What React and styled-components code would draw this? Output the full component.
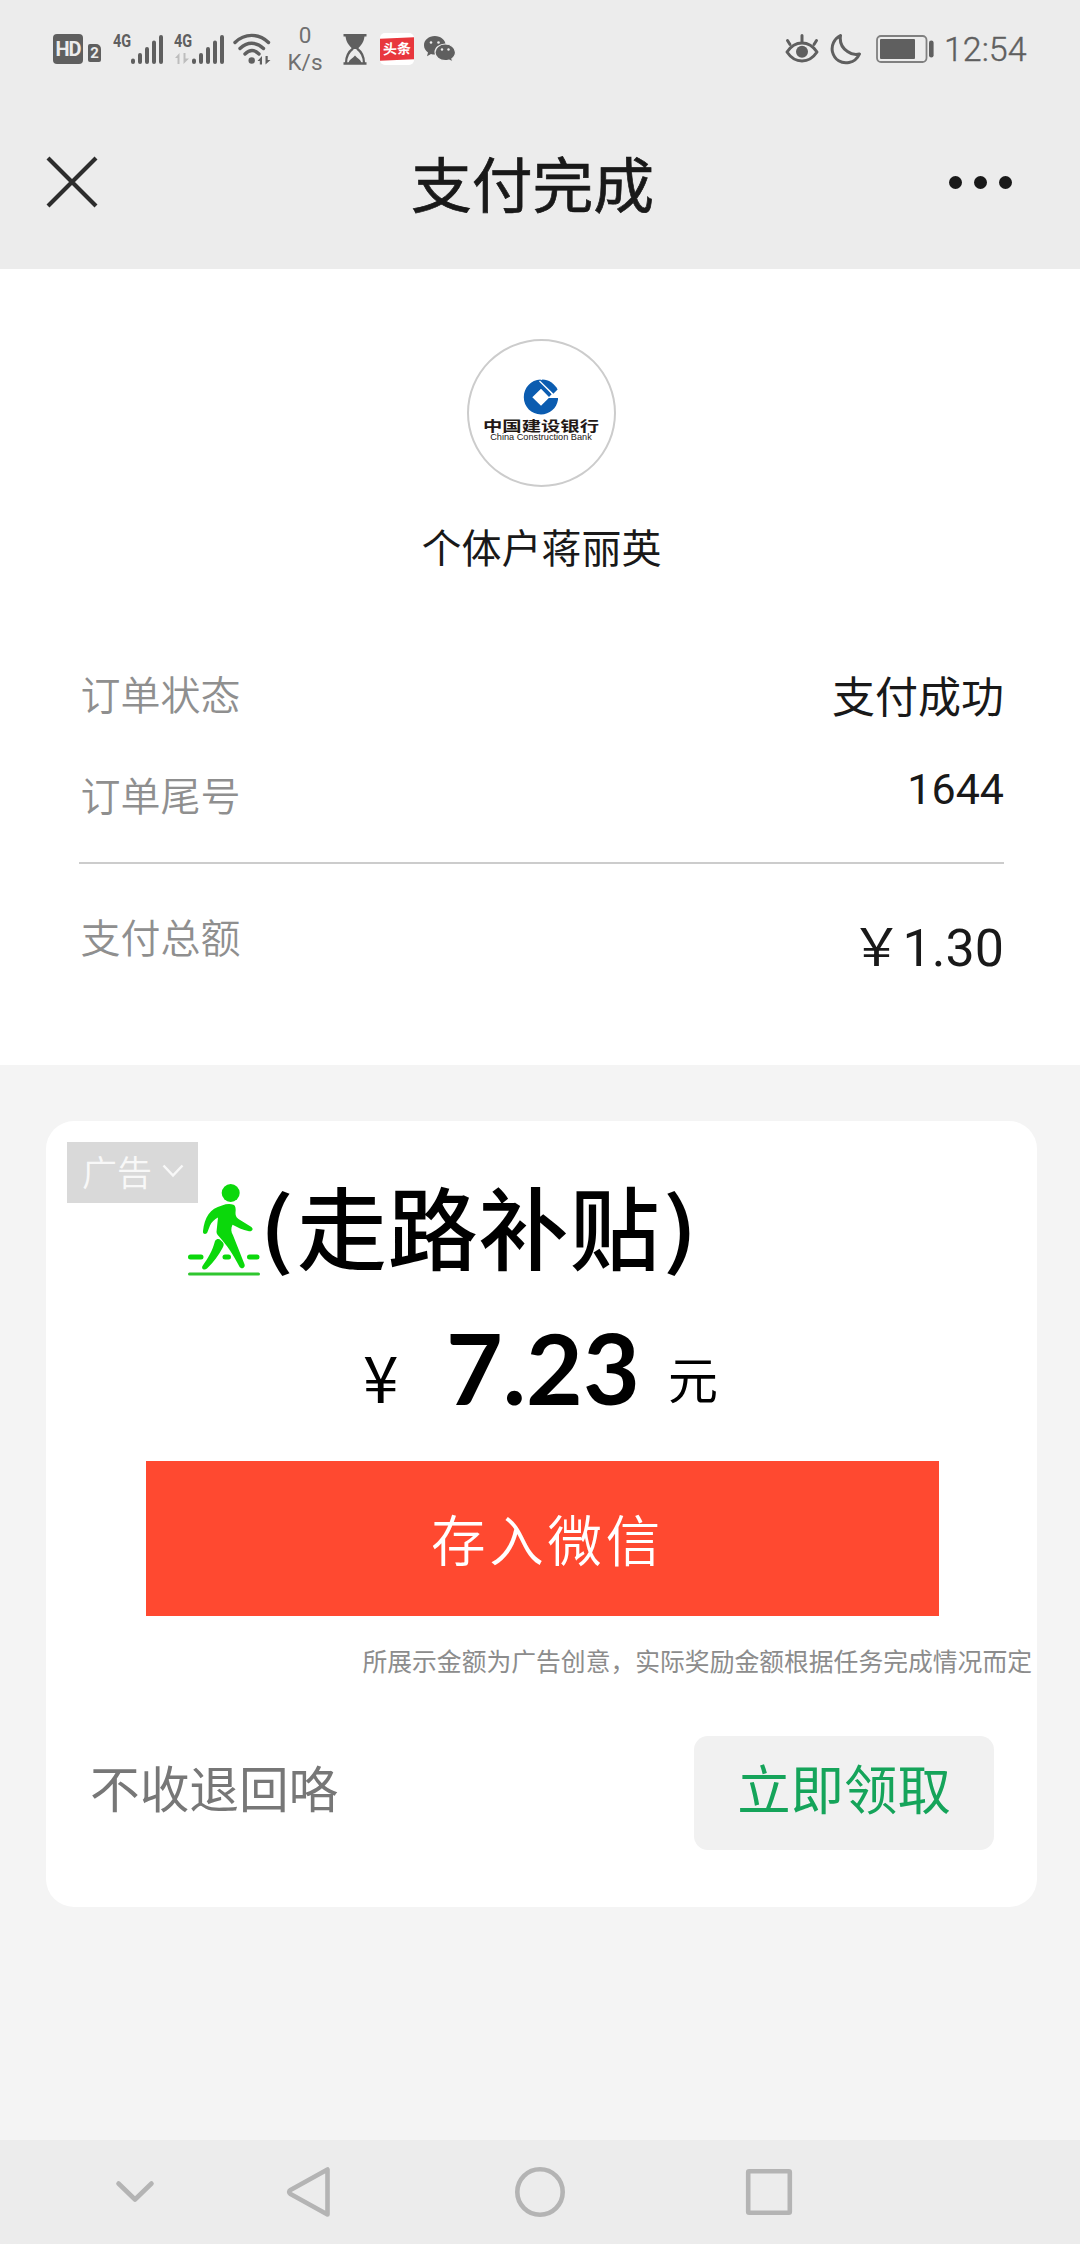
import React from 'react';
import styled, { createGlobalStyle } from 'styled-components';

const cjk = '"Noto Sans CJK SC", sans-serif';
const latin = 'Roboto, "Noto Sans CJK SC", sans-serif';

const GlobalStyle = createGlobalStyle`
  * { box-sizing: border-box; }
  body {
    margin      : 0;
    background  : #f4f4f4;
    font-family : ${cjk};
  }
`;

const SignalBars = () => (
  <svg width="32" height="32" viewBox="0 0 32 32" stroke="#5f5f5f" strokeWidth="4" strokeLinecap="round">
    <path d="M2 27.500v1.500M9 22v7M16 16v13M23 9.500v19.500M30 4v25" />
  </svg>
);

const WifiIcon = () => (
  <svg width="38" height="32" viewBox="0 0 38 32" fill="none" stroke="#5f5f5f" strokeWidth="3.4" strokeLinecap="round">
    <path d="M2 9.500C11.500 0 26 0 35.500 9.500M7 15.500C14 8.500 23.500 8.500 30.500 15.500M12 21c4.500-4.500 9.500-4.500 14 0" />
    <circle cx="18.700" cy="27.500" r="3.200" fill="#5f5f5f" stroke="none" />
    <path d="M24.500 28l4.500-5v8.500h-2.200V28zM37.500 27l-5 4.500V23h2.200v4z" fill="#5f5f5f" stroke="none" />
  </svg>
);

const HourglassIcon = () => (
  <svg width="24" height="32" viewBox="0 0 24 32" fill="none" stroke="#5f5f5f">
    <path d="M.5 2.200h23M.5 30.500h23" strokeWidth="2.400" />
    <path d="M2.500 2h19c0 7-4 11-7 14h-5c-3-3-7-7-7-14z" fill="#5f5f5f" stroke="none" />
    <path d="M10 15.500c-4 3-7 7-7 14.500M14 15.500c4 3 7 7 7 14.500" strokeWidth="2.200" />
    <path d="M5.500 30c1-4 4-4.500 6.500-7.500 2.500 3 5.500 3.500 6.500 7.500z" fill="#5f5f5f" stroke="none" />
  </svg>
);

const WechatIcon = () => (
  <svg width="32" height="26" viewBox="0 0 32 26">
    <path
      d="M10.800 0C4.800 0 0 4 0 9.200c0 3 1.500 5.500 4 7.200l-1 3.800 4-2.300c1.200.4 2.500.6 3.800.6 6 0 10.800-4 10.800-9.300C21.600 4 16.800 0 10.800 0z"
      fill="#5f5f5f"
    />
    <path
      d="M21.200 8c5.800 0 10.300 3.700 10.300 8.300 0 2.700-1.400 5-3.600 6.500l.8 3.200-3.600-1.900c-1.200.3-2.500.6-3.900.6-5.700 0-10.200-3.800-10.200-8.400S15.500 8 21.200 8z"
      fill="#5f5f5f" stroke="#ececec" strokeWidth="1.200"
    />
    <g fill="#ececec">
      <circle cx="7" cy="6.500" r="1.300" /><circle cx="14.500" cy="6.500" r="1.300" />
      <circle cx="18" cy="13.500" r="1.200" /><circle cx="24.500" cy="13.500" r="1.200" />
    </g>
  </svg>
);

const EyeIcon = () => (
  <svg width="34" height="32" viewBox="0 0 34 32" fill="none" stroke="#5f5f5f" strokeWidth="3" strokeLinecap="round" strokeLinejoin="round">
    <path d="M2 19C10 7 24 7 32 19 24 31 10 31 2 19z" />
    <path d="M17 8.500v-6M5 11.500l-2.500-4M29 11.500l2.500-4" />
    <circle cx="17" cy="18.800" r="6" fill="#5f5f5f" stroke="none" />
  </svg>
);

const MoonIcon = () => (
  <svg width="32" height="32" viewBox="0 0 32 32" fill="none" stroke="#5f5f5f" strokeWidth="3" strokeLinejoin="round">
    <path d="M10.500 2.500C4 6 1 12.500 2.500 19c2 8 9 12 16.500 10.500 5-1 8.500-4 10.500-8.500-4 1-8 .5-12-2.500C11.500 14.500 9.500 9 10.500 2.500z" />
  </svg>
);

const BatteryIcon = () => (
  <svg width="58" height="28" viewBox="0 0 58 28">
    <rect x="1" y="1" width="49.500" height="26" rx="4" fill="none" stroke="#808080" strokeWidth="1.800" />
    <rect x="4" y="4" width="35" height="20" rx="1" fill="#5f5f5f" />
    <rect x="53" y="5.500" width="4.600" height="17" rx="2.300" fill="#5f5f5f" />
  </svg>
);

const CloseIcon = () => (
  <svg width="52" height="52" viewBox="0 0 52 52" stroke="#2c2c2c" strokeWidth="4.200">
    <path d="M2 2l48 48M50 2L2 50" />
  </svg>
);

const BankLogo = () => (
  <svg width="36" height="36" viewBox="0 0 36 36">
    <path
      d="M17.500 .5C8 1 .8 8.500 .8 18.300c0 9.500 7.600 17.200 17.200 17.200 8.600 0 15.700-6.200 17-14.700v-1.800H25.800L18 26.800 9.300 18.300 18 9.700l8 8.300 2.700-2.700z"
      fill="#0b5cb0"
    />
    <path d="M17 1.700L30.300 14.800l4.300-4.300C31.500 4.500 25.500 .5 19.500 .5z" fill="#0b5cb0" />
    <path d="M16.500 2L29.500 15" stroke="#fff" strokeWidth="1.200" />
  </svg>
);

const WalkerIcon = () => (
  <svg width="74" height="92" viewBox="0 0 74 92" fill="#0bd80b">
    <circle cx="43.700" cy="9" r="9" />
    <path d="M35 21.500c4-1.500 8-1.800 11.500-.8 2.200 1 2.500 4 2 8 0 4 1.500 5.500 5 7.500l10.500 6.500c3 2 1.500 5-2 4.500-6.500-1.500-12-4-16.500-6.500-1.800 4-1.500 7 .5 10.500l11.500 29c1.300 3.500-3 5.500-5 2.500C46 70 40 61.500 32.500 53c-2.500-2.500-3.500-4-2.800-7L31 33.500c-3.500 2-6.500 4.500-8 8l-2.700 7c-1.300 2.500-5 1.500-4.300-1.500C17.500 33.500 23 24.500 35 21.500z" />
    <path d="M28 57c2-2.500 4-2.500 6-.5 3 2.500 3.500 4 1.500 7.500-4 7.500-9 14.500-15.500 20.500-3 2.500-6 0-4.500-2.500C21 74 25.500 67 28 57z" />
    <path d="M3.500 73h10.500M38 73h3.500M62.500 73h7.500" stroke="#0bd80b" strokeWidth="5" strokeLinecap="round" />
    <path d="M2.500 90h69" stroke="#2fc62f" strokeWidth="3" strokeLinecap="round" />
  </svg>
);

const rows = [
  { label: '订单状态', value: '支付成功', lh: 72 },
  { label: '订单尾号', value: '1644', lh: 53 },
];

const App = () => (
  <Page>
    <GlobalStyle />
    <StatusBar>
      <HdBadge>HD</HdBadge>
      <SimBadge>2</SimBadge>
      <Network $left={12}>
        <NetworkType><span>4G</span></NetworkType>
        <SignalBars />
      </Network>
      <Network $left={11}>
        <NetworkType>
          <span>4G</span>
          <svg width="14" height="11" viewBox="0 0 14 11" fill="#bdbdbd">
            <path d="M0 5l4.500-5v11H2.500V5zM14 5.500L8.500 11V0h2v5.500z" />
          </svg>
        </NetworkType>
        <SignalBars />
      </Network>
      <Slot $left={9}><WifiIcon /></Slot>
      <Speed><span>0</span><span>K/s</span></Speed>
      <Slot $left={20}><HourglassIcon /></Slot>
      <Toutiao><span>头条</span></Toutiao>
      <Slot $left={10}><WechatIcon /></Slot>
      <StatusRight>
        <EyeIcon />
        <Slot $left={11}><MoonIcon /></Slot>
        <Slot $left={14}><BatteryIcon /></Slot>
        <Clock>12:54</Clock>
      </StatusRight>
    </StatusBar>

    <TitleBar>
      <CloseIcon />
      <Title>支付完成</Title>
      <More><i /><i /><i /></More>
    </TitleBar>

    <Receipt>
      <Avatar>
        <BankLogo />
        <BankName>中国建设银行</BankName>
        <BankNameEn>China Construction Bank</BankNameEn>
      </Avatar>
      <Merchant>个体户蒋丽英</Merchant>
      {rows.map(row => (
        <Row key={row.label}>
          <Label>{row.label}</Label>
          <Value $lh={row.lh}>{row.value}</Value>
        </Row>
      ))}
      <Divider />
      <Row>
        <Label>支付总额</Label>
        <Total>￥1.30</Total>
      </Row>
    </Receipt>

    <AdCard>
      <AdTag>
        广告
        <svg width="22" height="14" viewBox="0 0 22 14" fill="none" stroke="#f8f8f8" strokeWidth="2.500">
          <path d="M1.500 1.500L11 11.500l9.500-10" />
        </svg>
      </AdTag>
      <Headline>
        <WalkerIcon />
        <Paren>(</Paren>
        <HeadlineText>走路补贴</HeadlineText>
        <Paren>)</Paren>
      </Headline>
      <Amount>
        <Yen>¥</Yen>
        <Figure>7.23</Figure>
        <Yuan>元</Yuan>
      </Amount>
      <Deposit>存入微信</Deposit>
      <Disclaimer>所展示金额为广告创意，实际奖励金额根据任务完成情况而定</Disclaimer>
      <AdFooter>
        <AdName>不收退回咯</AdName>
        <Claim>立即领取</Claim>
      </AdFooter>
    </AdCard>

    <NavBar>
      <NavIcon $left={115} width="40" height="24" viewBox="0 0 40 24">
        <path d="M3.500 3.500L20 19.500l16.500-16" />
      </NavIcon>
      <NavIcon $left={131} width="46" height="52" viewBox="0 0 46 52">
        <path d="M41.500 3.500v45L4.500 28c-1.800-1.200-1.800-2.800 0-4z" />
      </NavIcon>
      <NavIcon $left={182} width="52" height="52" viewBox="0 0 52 52">
        <circle cx="26" cy="26" r="22.700" />
      </NavIcon>
      <NavIcon $left={179} width="48" height="48" viewBox="0 0 48 48">
        <rect x="3.200" y="3.200" width="41.600" height="41.600" rx="1" />
      </NavIcon>
    </NavBar>
  </Page>
);

const Page = styled.div`
  display        : flex;
  flex-direction : column;
  width          : 1080px;
  height         : 2244px;
  background     : #f4f4f4;
  overflow       : hidden;

  svg { display: block; flex: none; }
`;

const StatusBar = styled.div`
  display     : flex;
  align-items : center;
  flex        : none;
  height      : 98px;
  padding     : 0 53px;
  background  : #ececec;
  color       : #5f5f5f;
  font-family : ${latin};
`;

const Slot = styled.div`
  margin-left : ${p => p.$left}px;
`;

const HdBadge = styled.div`
  width          : 30px;
  height         : 30px;
  border-radius  : 4px;
  background     : #5f5f5f;
  color          : #ececec;
  font-size      : 20px;
  font-weight    : 700;
  line-height    : 30px;
  text-align     : center;
  letter-spacing : -1px;
`;

const SimBadge = styled.div`
  width         : 13px;
  height        : 18px;
  margin        : 7px 0 0 5px;
  border-radius : 2px 5px 2px 2px;
  background    : #5f5f5f;
  color         : #ececec;
  font-size     : 15px;
  font-weight   : 700;
  line-height   : 19px;
  text-align    : center;
`;

const Network = styled.div`
  display     : flex;
  height      : 32px;
  margin-left : ${p => p.$left}px;
`;

const NetworkType = styled.div`
  width : 18px;

  span {
    display          : block;
    font-size        : 19px;
    font-weight      : 700;
    line-height      : 16px;
    transform        : scaleX(.76);
    transform-origin : left;
  }

  svg { margin: 4px 0 0 1px; }
`;

const Speed = styled.div`
  display        : flex;
  flex-direction : column;
  align-items    : center;
  width          : 36px;
  margin-left    : 16px;
  color          : #707070;
  font-size      : 22.5px;
  line-height    : 27px;
`;

const Toutiao = styled.div`
  display       : flex;
  align-items   : center;
  width         : 34px;
  height        : 32px;
  margin-left   : 13px;
  border-radius : 5px;
  background    : #fff;

  span {
    width       : 34px;
    height      : 22px;
    background  : #e8373d;
    color       : #fff;
    font-family : ${cjk};
    font-size   : 14px;
    font-weight : 700;
    line-height : 21px;
    text-align  : center;
    transform   : skewY(-2.5deg);
  }
`;

const StatusRight = styled.div`
  display     : flex;
  align-items : center;
  margin-left : auto;
`;

const Clock = styled.div`
  width       : 83px;
  margin-left : 10px;
  font-size   : 34px;
  font-weight : 300;
  line-height : 40px;
  -webkit-text-stroke : .4px #5f5f5f;
`;

const TitleBar = styled.div`
  display         : flex;
  align-items     : center;
  justify-content : space-between;
  flex            : none;
  height          : 171px;
  padding         : 0 68px 3px 46px;
  background      : #ececec;
`;

const Title = styled.h1`
  margin      : 0 0 0 18px;
  color       : #191919;
  font-size   : 60.8px;
  font-weight : 400;
  line-height : 72px;
  -webkit-text-stroke : .7px #191919;
`;

const More = styled.div`
  display : flex;
  gap     : 12px;

  i {
    width         : 13px;
    height        : 13px;
    border-radius : 50%;
    background    : #191919;
  }
`;

const Receipt = styled.section`
  flex       : none;
  height     : 796px;
  padding    : 70px 76px 0 79px;
  background : #fff;
`;

const Avatar = styled.div`
  display        : flex;
  flex-direction : column;
  align-items    : center;
  width          : 149px;
  height         : 148px;
  margin         : 0 auto;
  padding        : 38px 1px 0 0;
  border         : 2px solid #ccc;
  border-radius  : 50%;
  color          : #231815;
  white-space    : nowrap;
`;

const BankName = styled.div`
  margin-top  : 1px;
  font-size   : 14px;
  font-weight : 700;
  line-height : 18px;
  transform   : scaleX(1.38);
`;

const BankNameEn = styled.div`
  margin-top  : -2px;
  font-family : "Liberation Sans", sans-serif;
  font-size   : 9.2px;
  line-height : 11px;
`;

const Merchant = styled.div`
  margin-top  : 31px;
  color       : #191919;
  font-size   : 40px;
  line-height : 56px;
  text-align  : center;
`;

const Row = styled.div`
  display         : flex;
  align-items     : flex-start;
  justify-content : space-between;
  height          : 60px;
  margin-top      : 41px;

  ${Merchant} + & { margin-top: 88px; }
`;

const Label = styled.div`
  padding-left : 1.5px;
  color        : #8f8f8f;
  font-size    : 40px;
  font-weight  : 350;
  line-height  : 62px;
`;

const Value = styled.div`
  color       : #191919;
  font-family : ${latin};
  font-size   : 43px;
  line-height : ${p => p.$lh}px;
`;

const Total = styled(Value)`
  font-size   : 52px;
  line-height : 88px;
`;

const Divider = styled.div`
  height     : 2px;
  margin-top : 39px;
  background : #ccc;
`;

const AdCard = styled.section`
  position      : relative;
  flex          : none;
  height        : 786px;
  margin        : 56px 43px 0 46px;
  padding-top   : 63px;
  border-radius : 28px;
  background    : #fff;
`;

const AdTag = styled.div`
  position    : absolute;
  top         : 21px;
  left        : 21px;
  display     : flex;
  align-items : center;
  gap         : 10px;
  width       : 131px;
  height      : 61px;
  padding     : 0 0 3px 15px;
  background  : #d9d9d9;
  color       : #f8f8f8;
  font-size   : 35px;
  font-weight : 350;
  line-height : 58px;
`;

const Headline = styled.div`
  display      : flex;
  height       : 92px;
  padding-left : 141px;
  color        : #000;
  font-weight  : 500;
  white-space  : nowrap;
`;

const HeadlineText = styled.div`
  margin-left    : 5px;
  font-size      : 90px;
  line-height    : 80px;
  letter-spacing : .8px;
`;

const Paren = styled.div`
  width       : 31px;
  font-size   : 83px;
  line-height : 78px;
  text-align  : center;
  transform   : scaleX(1.2);

  ${HeadlineText} + & { margin-left: 5px; }
`;

const Amount = styled.div`
  display      : flex;
  align-items  : baseline;
  height       : 120px;
  margin-top   : 31px;
  padding-left : 317px;
  color        : #000;
`;

const Yen = styled.span`
  width     : 83px;
  font-size : 64px;
  transform : translateY(-2px);
`;

const Figure = styled.span`
  width       : 222px;
  font-family : Lato, sans-serif;
  font-size   : 98px;
  font-weight : 700;
  line-height : 120px;
`;

const Yuan = styled.span`
  font-size : 50px;
  transform : translateY(-6px);
`;

const Deposit = styled.div`
  width          : 793px;
  height         : 155px;
  margin         : 34px 0 0 100px;
  padding-left   : 10px;
  background     : #ff4930;
  color          : #fff;
  font-size      : 54.5px;
  font-weight    : 350;
  line-height    : 153px;
  letter-spacing : 3.8px;
  text-align     : center;
`;

const Disclaimer = styled.div`
  margin-top    : 29px;
  padding-right : 5px;
  color         : #8c8c8c;
  font-size     : 24.8px;
  line-height   : 30px;
  text-align    : right;
`;

const AdFooter = styled.div`
  display         : flex;
  justify-content : space-between;
  margin-top      : 61px;
  padding         : 0 43px 0 44px;
`;

const AdName = styled.div`
  color       : #777;
  font-size   : 49.7px;
  line-height : 101px;
`;

const Claim = styled.div`
  width         : 300px;
  height        : 114px;
  border-radius : 14px;
  background    : #f1f1f1;
  color         : #15a45a;
  font-size     : 53.4px;
  line-height   : 102px;
  text-align    : center;
`;

const NavBar = styled.nav`
  display     : flex;
  align-items : center;
  flex        : none;
  height      : 104px;
  margin-top  : auto;
  background  : #ececec;
`;

const NavIcon = styled.svg`
  margin-left     : ${p => p.$left}px;
  fill            : none;
  stroke          : #b4b4b4;
  stroke-width    : 4.6;
  stroke-linecap  : round;
  stroke-linejoin : round;
`;

export default App;
